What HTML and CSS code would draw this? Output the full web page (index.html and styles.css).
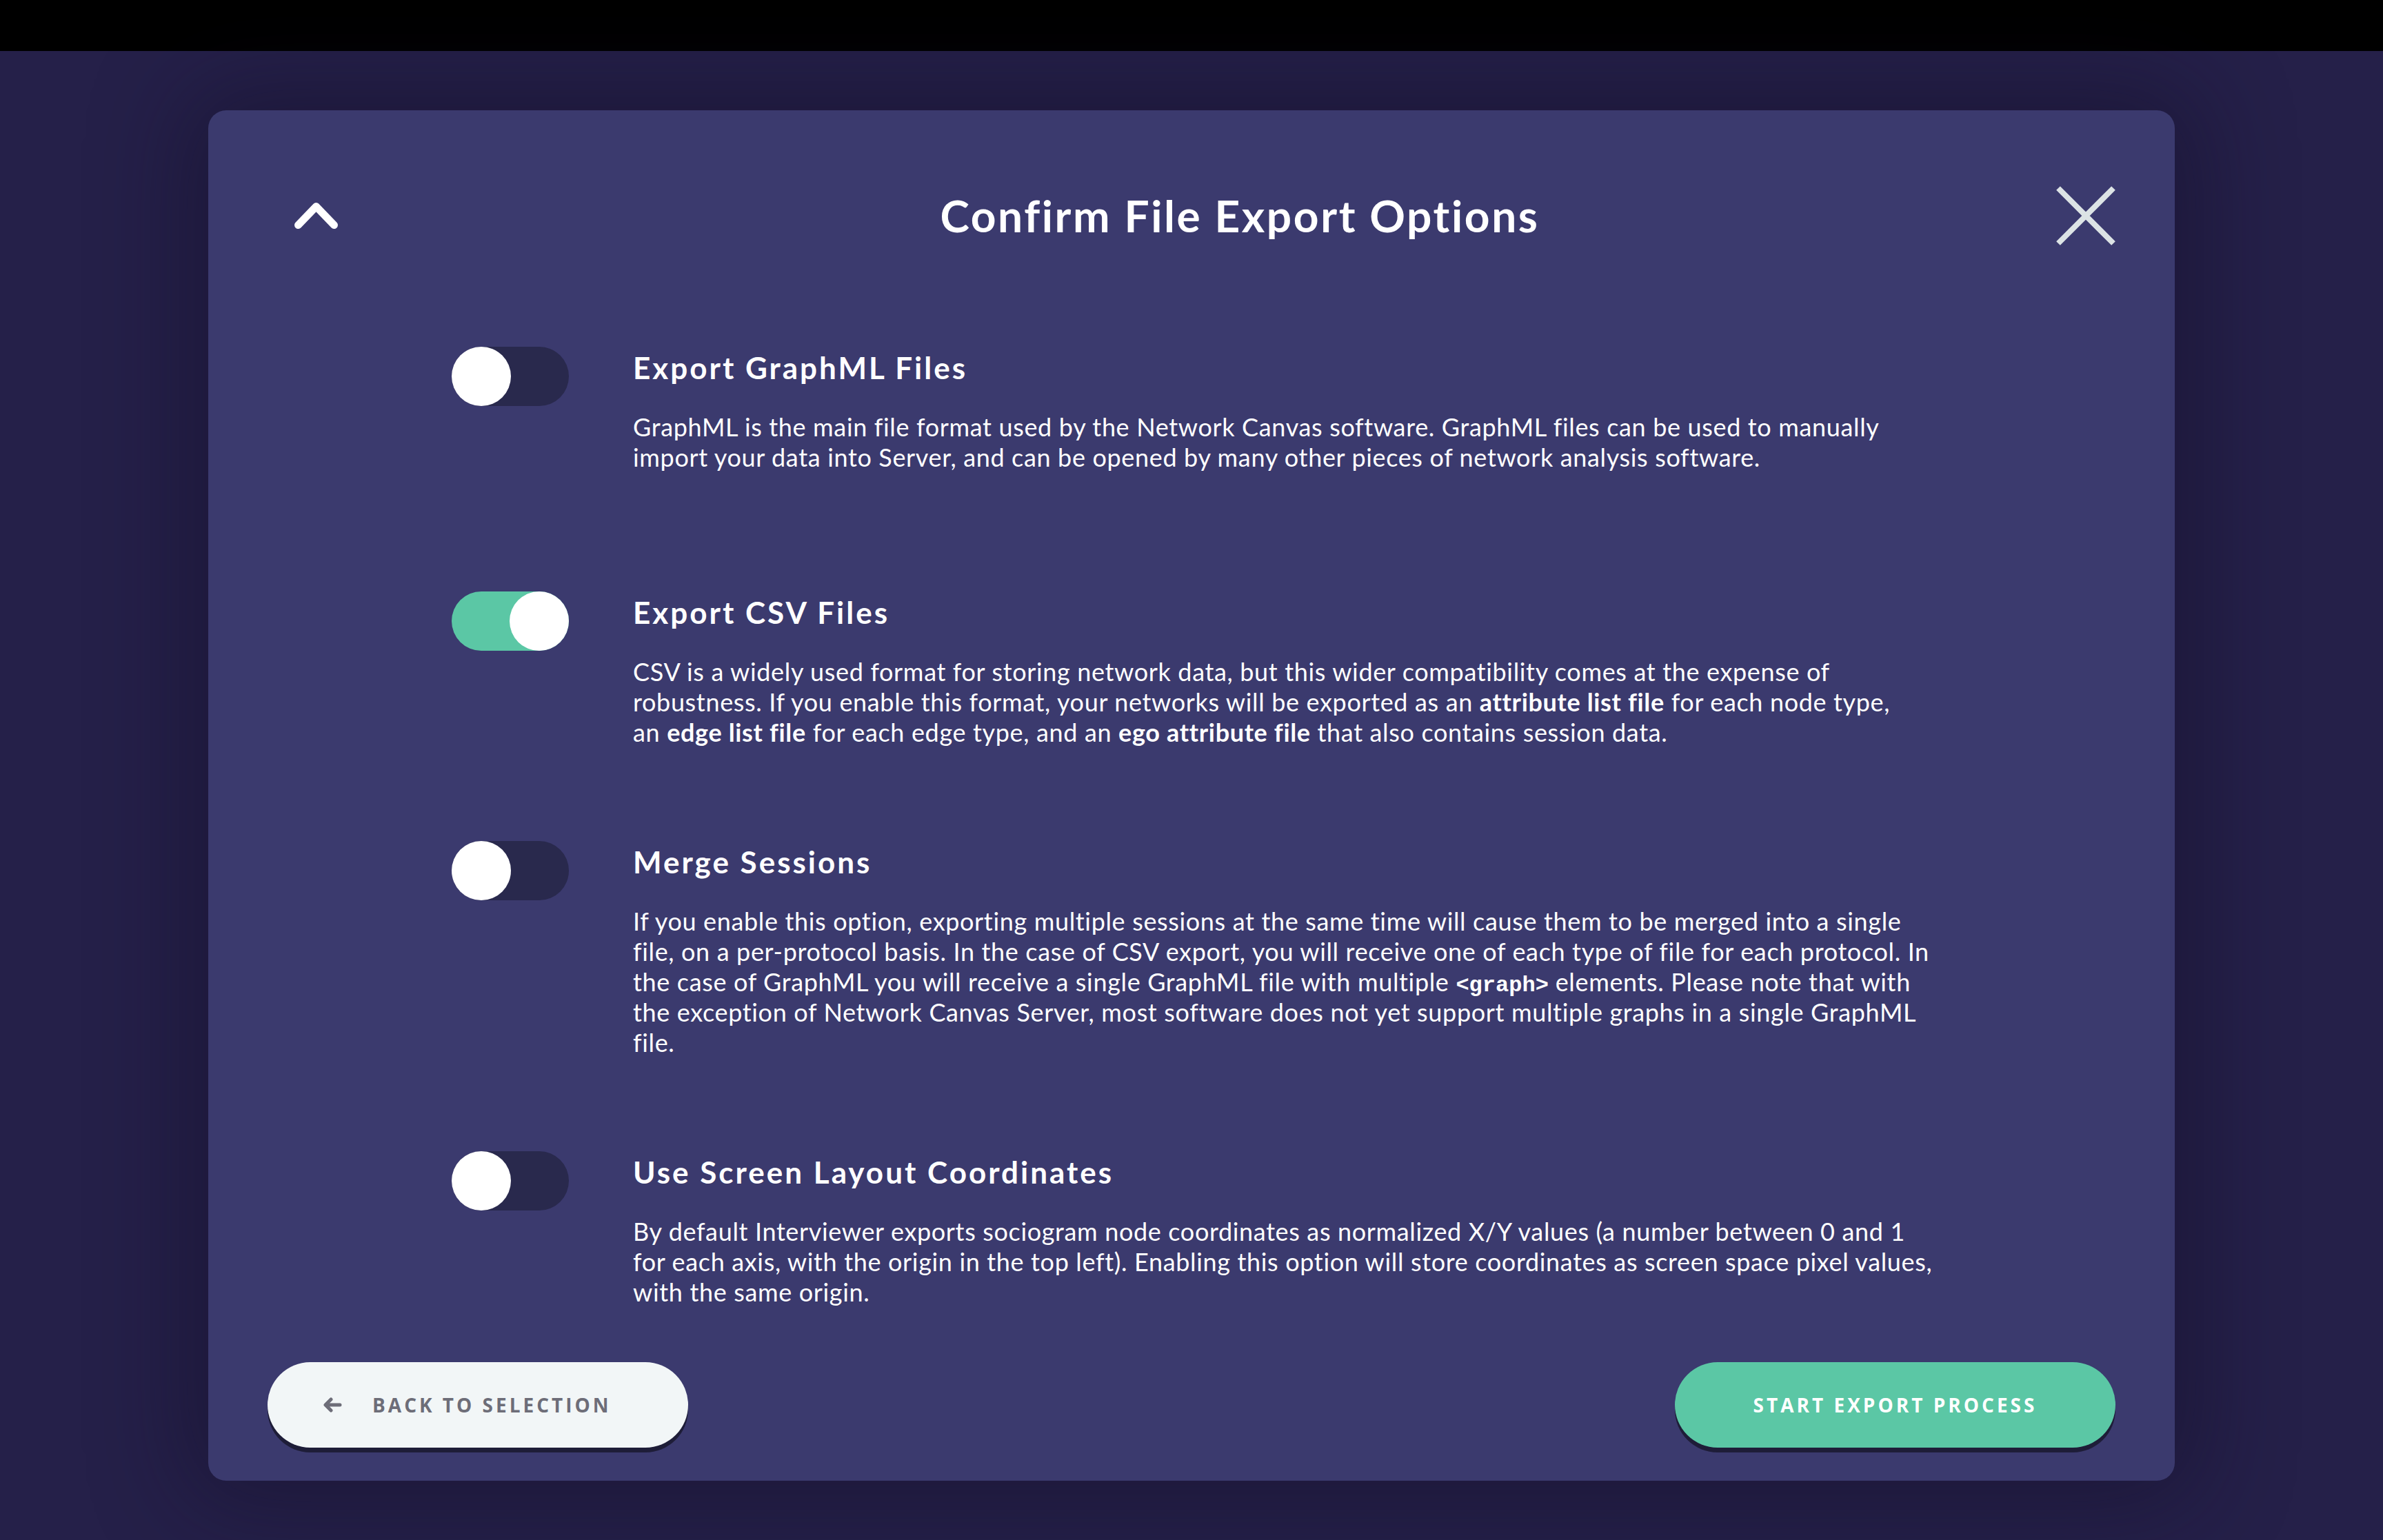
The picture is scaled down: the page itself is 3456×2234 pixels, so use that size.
FILE: index.html
```html
<!DOCTYPE html>
<html lang="en">
<head>
<meta charset="utf-8">
<title>Confirm File Export Options</title>
<link rel="stylesheet" href="styles.css">
</head>
<body>
<div class="topbar"></div>
<main class="stage">
  <section class="modal">
    <header class="modal-header">
      <button class="icon-btn chevron" aria-label="Collapse">
        <svg width="63" height="38" viewBox="0 0 63 38"><path d="M5.5 32.5 L31.5 5.5 L57.5 32.5" fill="none" stroke="#ffffff" stroke-width="11" stroke-linecap="round" stroke-linejoin="round"/></svg>
      </button>
      <h1 class="modal-title">Confirm File Export Options</h1>
      <button class="icon-btn close" aria-label="Close">
        <svg width="86" height="86" viewBox="0 0 86 86"><path d="M3 3 L83 83 M83 3 L3 83" fill="none" stroke="#dce3e5" stroke-width="8"/></svg>
      </button>
    </header>

    <div class="options">
      <div class="option option-first">
        <div class="toggle"><span class="knob"></span></div>
        <div class="option-text">
          <h2>Export GraphML Files</h2>
          <p>GraphML is the main file format used by the Network Canvas software. GraphML files can be used to manually<br>
          import your data into Server, and can be opened by many other pieces of network analysis software.</p>
        </div>
      </div>

      <div class="option">
        <div class="toggle on"><span class="knob"></span></div>
        <div class="option-text">
          <h2>Export CSV Files</h2>
          <p>CSV is a widely used format for storing network data, but this wider compatibility comes at the expense of<br>
          robustness. If you enable this format, your networks will be exported as an <strong>attribute list file</strong> for each node type,<br>
          an <strong>edge list file</strong> for each edge type, and an <strong>ego attribute file</strong> that also contains session data.</p>
        </div>
      </div>

      <div class="option">
        <div class="toggle"><span class="knob"></span></div>
        <div class="option-text">
          <h2>Merge Sessions</h2>
          <p>If you enable this option, exporting multiple sessions at the same time will cause them to be merged into a single<br>
          file, on a per-protocol basis. In the case of CSV export, you will receive one of each type of file for each protocol. In<br>
          the case of GraphML you will receive a single GraphML file with multiple <code>&lt;graph&gt;</code> elements. Please note that with<br>
          the exception of Network Canvas Server, most software does not yet support multiple graphs in a single GraphML<br>
          file.</p>
        </div>
      </div>

      <div class="option">
        <div class="toggle"><span class="knob"></span></div>
        <div class="option-text">
          <h2>Use Screen Layout Coordinates</h2>
          <p>By default Interviewer exports sociogram node coordinates as normalized X/Y values (a number between 0 and 1<br>
          for each axis, with the origin in the top left). Enabling this option will store coordinates as screen space pixel values,<br>
          with the same origin.</p>
        </div>
      </div>
    </div>

    <footer class="modal-footer">
      <button class="btn btn-light">
        <svg class="btn-icon" width="28" height="22" viewBox="0 0 28 22"><path d="M25 11 H5 M12 3 L4 11 L12 19" fill="none" stroke="#6d6d78" stroke-width="5" stroke-linecap="round" stroke-linejoin="round"/></svg>
        <span>Back to Selection</span>
      </button>
      <button class="btn btn-primary"><span>Start Export Process</span></button>
    </footer>
  </section>
</main>
</body>
</html>
```

FILE: styles.css
```css
html, body {
  margin: 0;
  padding: 0;
}
body {
  width: 3456px;
  height: 2234px;
  background: #252049;
  font-family: Lato, "Open Sans", "Liberation Sans", sans-serif;
  color: #ffffff;
  overflow: hidden;
  display: flex;
  flex-direction: column;
}
.topbar {
  height: 74px;
  background: #000000;
  flex: none;
}
.stage {
  flex: 1;
  display: flex;
  align-items: center;
  justify-content: center;
}
.modal {
  width: 2852px;
  height: 1988px;
  box-sizing: border-box;
  background: #3b3a6e;
  border-radius: 26px;
  box-shadow: 0 0 140px 30px rgba(18, 14, 38, 0.45);
  display: flex;
  flex-direction: column;
  padding: 110px 86px 48px 86px;
}
.modal-header {
  display: grid;
  grid-template-columns: auto 1fr auto;
  align-items: center;
  height: 86px;
  padding-left: 39px;
}
.icon-btn {
  background: none;
  border: 0;
  padding: 0;
  display: flex;
  cursor: pointer;
}
.chevron svg, .close svg { display: block; }
.modal-title {
  margin: 0;
  text-align: center;
  padding-left: 124px;
  font-size: 64px;
  font-weight: 700;
  letter-spacing: 2.6px;
  line-height: 86px;
}
.options {
  margin: 147px 0 0 267px;
  width: 2190px;
  display: flex;
  flex-direction: column;
  gap: 136px;
}
.option {
  display: grid;
  grid-template-columns: 170px 1fr;
  column-gap: 93px;
  align-items: start;
}
.option-first {
  padding-bottom: 37px;
}
.toggle {
  width: 170px;
  height: 86px;
  border-radius: 43px;
  background: #29294d;
  display: flex;
  justify-content: flex-start;
}
.toggle.on {
  background: #5bc7a5;
  justify-content: flex-end;
}
.knob {
  width: 86px;
  height: 86px;
  border-radius: 50%;
  background: #ffffff;
}
.option-text h2 {
  margin: 0 0 34px;
  font-size: 44px;
  line-height: 60px;
  font-weight: 700;
  letter-spacing: 3px;
}
.option-text p {
  margin: 0;
  font-size: 36px;
  line-height: 44px;
  font-weight: 400;
  letter-spacing: 0.65px;
}
.option-text strong {
  font-weight: 700;
}
.option-text code {
  font-family: "Liberation Mono", "DejaVu Sans Mono", monospace;
  font-weight: 700;
  font-size: 32px;
  line-height: 1;
  letter-spacing: 0;
}
.modal-footer {
  margin-top: auto;
  display: flex;
  justify-content: space-between;
  align-items: center;
}
.btn {
  height: 124px;
  border-radius: 62px;
  border: 0;
  display: flex;
  align-items: center;
  font-family: "Open Sans", "Liberation Sans", sans-serif;
  font-weight: 700;
  font-size: 28px;
  letter-spacing: 4px;
  text-transform: uppercase;
  box-shadow: 0 7px 0 rgba(24, 23, 42, 0.8);
  cursor: pointer;
}
.btn-light {
  width: 610px;
  background: #f2f6f7;
  color: #6d6d78;
  padding: 0 0 0 80px;
  gap: 44px;
  justify-content: flex-start;
}
.btn-icon { display: block; }
.btn-primary {
  width: 639px;
  background: #5bc7a5;
  color: #ffffff;
  justify-content: center;
  padding: 0;
}
```
